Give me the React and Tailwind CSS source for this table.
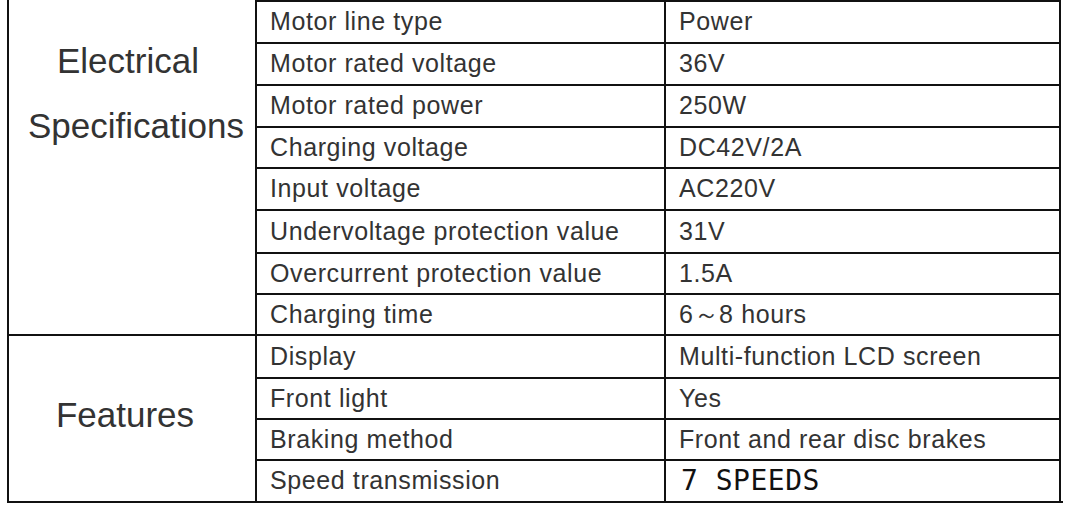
import React from 'react';

// Spec rows: [label, value, row height incl. top border, mono]
const electrical = [
  ['Motor line type', 'Power', 42],
  ['Motor rated voltage', '36V', 42],
  ['Motor rated power', '250W', 42],
  ['Charging voltage', 'DC42V/2A', 41],
  ['Input voltage', 'AC220V', 42],
  ['Undervoltage protection value', '31V', 43],
  ['Overcurrent protection value', '1.5A', 41],
  ['Charging time', '6～8 hours', 41],
];

const features = [
  ['Display', 'Multi-function LCD screen', 43],
  ['Front light', 'Yes', 41],
  ['Braking method', 'Front and rear disc brakes', 41],
  ['Speed transmission', '7 SPEEDS', 42, true],
];

const Row = ({ label, value, h, mono }) => (
  <div className="flex border-t-2 border-[#111]" style={{ height: h }}>
    <div className="w-[407px] flex items-center pl-[13px] text-[25px] tracking-[0.6px] text-[#333]">
      {label}
    </div>
    <div className="w-[395px] flex items-center pl-[13px] border-l-2 border-[#111]">
      {mono ? (
        <span className="pl-[2px] font-['DejaVu_Sans_Mono',monospace] text-[28px] tracking-[0.5px] text-[#111]">{value}</span>
      ) : (
        <span className="text-[25px] tracking-[0.6px] text-[#333]">{value}</span>
      )}
    </div>
  </div>
);

export default function App() {
  return (
    <div className="w-[1067px] h-[508px] bg-white font-['Liberation_Sans',Arial,sans-serif] text-[#333]">
      <div className="ml-[7px] w-[1056px] border-l-2 border-b-2 border-[#111]">
        {/* Electrical Specifications */}
        <div className="flex">
          <div className="w-[246px] shrink-0 pt-[28px] text-center text-[35px] leading-[65px]">
            <div className="pr-[8px]">Electrical</div>
            <div className="pl-[8px]">Specifications</div>
          </div>
          <div className="border-l-2 border-r-2 border-[#111]">
            {electrical.map(([label, value, h]) => (
              <Row key={label} label={label} value={value} h={h} />
            ))}
          </div>
        </div>
        {/* Features */}
        <div className="flex">
          <div className="w-[246px] shrink-0 border-t-2 border-[#111] flex items-center justify-center pb-[8px] pr-[14px] text-[35px] leading-[65px]">
            Features
          </div>
          <div className="border-l-2 border-r-2 border-[#111]">
            {features.map(([label, value, h, mono]) => (
              <Row key={label} label={label} value={value} h={h} mono={mono} />
            ))}
          </div>
        </div>
      </div>
    </div>
  );
}
